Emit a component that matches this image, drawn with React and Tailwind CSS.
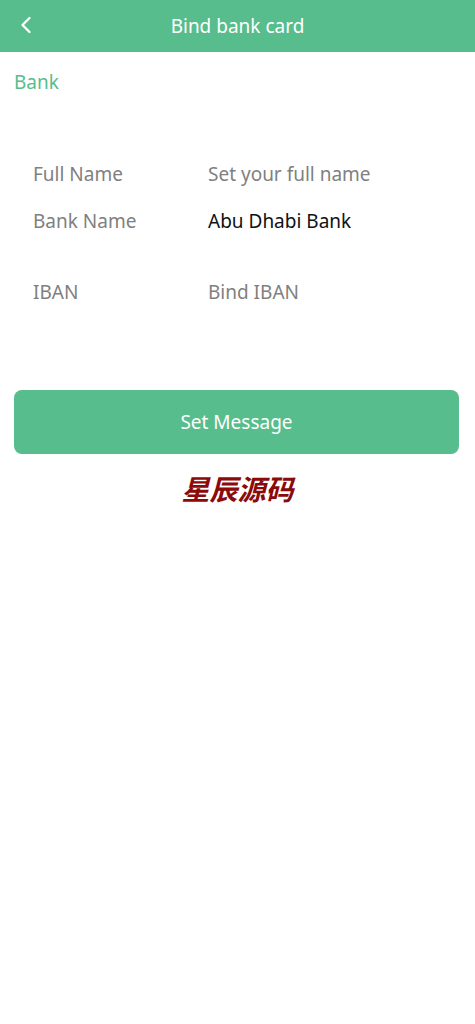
import { ChevronLeft } from "lucide-react";

const rows = [
  { label: "Full Name", value: "Set your full name", placeholder: true, gap: "h-[47px]" },
  { label: "Bank Name", value: "Abu Dhabi Bank", placeholder: false, gap: "h-[71px]" },
  { label: "IBAN", value: "Bind IBAN", placeholder: true, gap: "" },
];

export default function App() {
  return (
    <div
      className="min-h-[1024px] w-full bg-white"
      style={{ fontFamily: '"Noto Sans", "Noto Sans CJK SC", sans-serif' }}
    >
      <header className="relative flex h-[52px] items-center justify-center bg-[#57bd8c]">
        <button type="button" className="absolute left-[12px] top-[11px] text-white">
          <ChevronLeft size={28} strokeWidth={2} />
        </button>
        <h1 className="text-[19px] leading-[24px] text-white">Bind bank card</h1>
      </header>

      <div className="px-[14px] pt-[18px] text-[19px] leading-[24px] text-[#57bd8c]">Bank</div>

      <div className="mt-[68px] px-[33px]">
        {rows.map((row) => (
          <div key={row.label} className={`flex items-start ${row.gap}`}>
            <div className="w-[175px] text-[19px] leading-[24px] text-[#808080]">{row.label}</div>
            <div
              className={`text-[19px] leading-[24px] ${
                row.placeholder ? "text-[#808080]" : "text-[#111]"
              }`}
            >
              {row.value}
            </div>
          </div>
        ))}
      </div>

      <div className="mt-[86px] pl-[14px] pr-[16px]">
        <button
          type="button"
          className="flex h-[64px] w-full items-center justify-center rounded-[8px] bg-[#57bd8c] text-[19px] text-white"
        >
          Set Message
        </button>
      </div>

      <div className="mt-[18px] text-center text-[28px] font-bold italic leading-[34px] text-[#8b0a0a]">
        星辰源码
      </div>
    </div>
  );
}
